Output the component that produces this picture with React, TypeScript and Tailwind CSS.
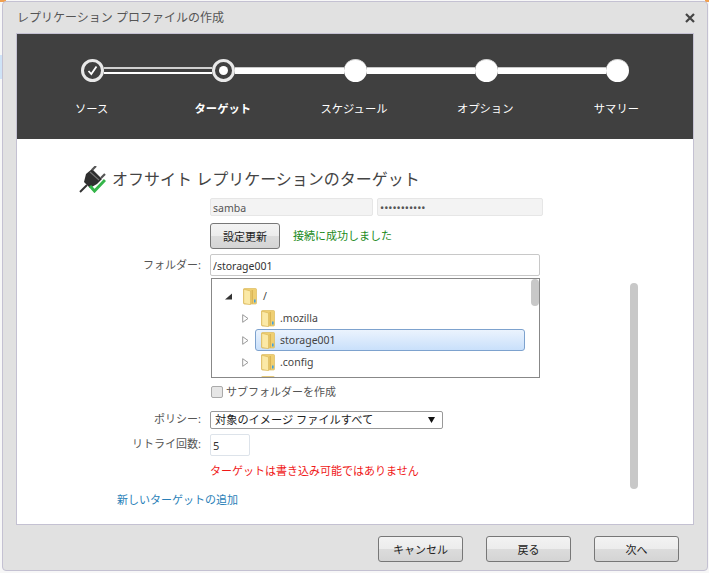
import { FC, ReactNode } from "react";

const font = "font-['Noto_Sans','Noto_Sans_CJK_JP',sans-serif]";

const Folder: FC = () => (
  <svg width="14" height="17" viewBox="0 0 14 17" className="shrink-0">
    <path d="M.5 1.5 Q.5 .5 1.5 .5 H12.5 Q13.5 .5 13.5 1.5 V15 Q13.5 16 12.5 16 H1.5 Q.5 16 .5 15 Z" fill="#efcf72" stroke="#dcbb5e" strokeWidth=".7" />
    <path d="M.7 1.2 L7.5 3 V16.7 L1.5 15.6 Q.7 15.4 .7 14.6 Z" fill="#fbe9a6" stroke="#d6b455" strokeWidth=".6" />
    <path d="M9.2 2 V15.5" stroke="#c9a343" strokeWidth=".8" />
    <rect x="11" y="11.5" width="1.6" height="3" fill="#3f9fe0" />
  </svg>
);

const ClosedArrow: FC = () => (
  <svg width="7" height="9" viewBox="0 0 7 9" className="shrink-0">
    <path d="M.7.7 L6 4.5 L.7 8.3 Z" fill="#fff" stroke="#999" strokeWidth="1" />
  </svg>
);

const OpenArrow: FC = () => (
  <svg width="7" height="7" viewBox="0 0 7 7" className="shrink-0">
    <path d="M7 .5 V6.5 H0 Z" fill="#333" />
  </svg>
);

const TreeRow: FC<{ name: string; selected?: boolean }> = ({ name, selected }) => (
  <div className="flex h-[22px] items-center pl-[30px]">
    <ClosedArrow />
    <div
      className={
        "ml-[6px] flex h-[22px] w-[270px] items-center gap-[5px] rounded-[3px] border pl-[5px] " +
        (selected
          ? "border-[#7da2ce] bg-gradient-to-b from-[#ebf3fd] to-[#c9e0fb]"
          : "border-transparent")
      }
    >
      <Folder />
      <span className="pt-[1px] text-[10.5px] text-[#444]">{name}</span>
    </div>
  </div>
);

const Button: FC<{ width: string; children: ReactNode }> = ({ width, children }) => (
  <button
    className={
      width +
      " h-[26px] rounded-[3px] border border-[#777] bg-[linear-gradient(#f3f3f3_0%,#ececec_50%,#dcdcdc_50%,#d4d4d4_100%)] text-[11px] leading-none text-[#222]"
    }
  >
    {children}
  </button>
);

const Step: FC<{ state: "done" | "current" | "todo" }> = ({ state }) => {
  if (state === "todo") {
    return <div className="h-[23px] w-[23px] shrink-0 rounded-full border-t border-[#cfcfcf] bg-white" />;
  }
  return (
    <div className="flex h-[23px] w-[23px] shrink-0 items-center justify-center rounded-full border-[3px] border-[#e8e8e8] bg-[#404040]">
      {state === "done" ? (
        <svg width="11" height="11" viewBox="0 0 11 11">
          <path d="M1.5 6 L4.3 9 L9.5 1.5" fill="none" stroke="#fff" strokeWidth="1.8" />
        </svg>
      ) : (
        <div className="h-[9px] w-[9px] rounded-full bg-white" />
      )}
    </div>
  );
};

const Line: FC<{ done?: boolean }> = ({ done }) =>
  done ? (
    <div className="h-[7px] flex-1 border-t-2 border-b-2 border-t-[#d0d0d0] border-b-white" />
  ) : (
    <div className="h-[7px] flex-1 border-t border-[#c8c8c8] bg-white" />
  );

const FieldLabel: FC<{ children?: ReactNode }> = ({ children }) => (
  <div className="w-[126px] shrink-0 pr-[9px] text-right text-[11px] text-[#555]">{children}</div>
);

const App: FC = () => {
  const steps = ["ソース", "ターゲット", "スケジュール", "オプション", "サマリー"];

  return (
    <div className={font + " relative h-[573px] w-[709px] overflow-hidden bg-[#f7f7f7] pt-[1px] pl-[2px]"}>
      <div className="absolute top-0 left-0 h-[2px] w-[6px] bg-[#f0a050]" />
      <div className="absolute top-0 right-0 h-[2px] w-[4px] bg-[#f0a050]" />
      <div className="absolute top-[55px] left-0 h-[24px] w-[2px] bg-[#cfe3f7]" />

      <div className="relative h-[570px] w-[706px] rounded-[4px] border border-[#c4c1d2] bg-[#e1e1e1] pr-[13px] pl-[13px]">
        <div className="flex h-[31px] items-center justify-between pl-[1px]">
          <span className="text-[12px] text-[#555]">レプリケーション プロファイルの作成</span>
          <svg width="10" height="10" viewBox="0 0 10 10" className="mr-[-1px]">
            <path d="M1 1 L9 9 M9 1 L1 9" stroke="#444" strokeWidth="2.2" />
          </svg>
        </div>

        <div className="border border-[#c4c1d2] bg-white">
          <div className="h-[105px] bg-[#404040]">
            <div className="flex items-center px-[64px] pt-[25px]">
              <Step state="done" />
              <Line done />
              <Step state="current" />
              <Line />
              <Step state="todo" />
              <Line />
              <Step state="todo" />
              <Line />
              <Step state="todo" />
            </div>
            <div className="mt-[19px] grid grid-cols-5 pr-[11px] pl-[9px]">
              {steps.map((s, i) => (
                <div key={s} className={"text-center text-[11.3px] text-white " + (i === 1 ? "font-bold" : "")}>
                  {s}
                </div>
              ))}
            </div>
          </div>

          <div className="relative h-[385px]">
            <div className="absolute top-[144px] left-[613px] h-[206px] w-[8px] rounded-full bg-[#c8c8c8]" />

            <div className="flex items-center pt-[27px] pl-[62px]">
              <svg width="27" height="27" viewBox="0 0 27 27" className="shrink-0">
                <path d="M1 26 L8 19" stroke="#333" strokeWidth="2" />
                <path d="M5 16 L7 8 L13 3 L23 13 L18 18 L11 22 Z" fill="#2f2f2f" />
                <path d="M11 6 L20 14" stroke="#777" strokeWidth="1.2" />
                <path d="M13 4 L17 0 M22 12 L26 8" stroke="#555" strokeWidth="2.2" />
                <path d="M11 20 L15.5 25 L26 14" fill="none" stroke="#35b54a" strokeWidth="3" />
              </svg>
              <h1 className="ml-[6px] text-[16px] leading-[27px] font-normal text-[#444]">
                オフサイト レプリケーションのターゲット
              </h1>
            </div>

            <div className="pt-[5px] pl-[67px]">
              <div className="flex pl-[126px]">
                <input
                  readOnly
                  value="samba"
                  className="h-[18px] w-[163px] rounded-[2px] border border-[#e6e6e6] bg-[#f3f3f3] px-[2px] pt-[1px] text-[10.5px] text-[#555]"
                />
                <input
                  readOnly
                  value="•••••••••••"
                  className="ml-[4px] h-[18px] w-[166px] rounded-[2px] border border-[#e6e6e6] bg-[#f3f3f3] px-[2px] pt-[1px] text-[11px] text-[#555]"
                />
              </div>

              <div className="mt-[7px] flex items-center pl-[126px]">
                <Button width="w-[70px]">設定更新</Button>
                <span className="ml-[13px] text-[11px] text-[#1a8a1a]">接続に成功しました</span>
              </div>

              <div className="mt-[5px] flex items-center">
                <FieldLabel>フォルダー:</FieldLabel>
                <input
                  readOnly
                  value="/storage001"
                  className="h-[22px] w-[330px] rounded-[2px] border border-[#c8c8c8] px-[2px] pt-[1px] text-[10.5px] text-[#333]"
                />
              </div>

              <div className="relative mt-[2px] ml-[127px] h-[100px] w-[329px] overflow-hidden border border-[#888] pt-[6px]">
                <div className="absolute top-0 right-0 h-[27px] w-[8px] rounded-full bg-[#c8c8c8]" />
                <div className="flex h-[22px] items-center pl-[13px]">
                  <OpenArrow />
                  <div className="ml-[11px] flex items-center gap-[6px]">
                    <Folder />
                    <span className="pt-[1px] text-[10.5px] text-[#444]">/</span>
                  </div>
                </div>
                <TreeRow name=".mozilla" />
                <TreeRow name="storage001" selected />
                <TreeRow name=".config" />
                <TreeRow name="" />
              </div>

              <div className="mt-[5px] ml-[127px] flex items-center">
                <div className="h-[12px] w-[12px] rounded-[2px] border border-[#aaa] bg-[#e6e6e6]" />
                <span className="ml-[3px] pt-[1px] text-[11px] text-[#555]">サブフォルダーを作成</span>
              </div>

              <div className="mt-[10px] flex items-center">
                <FieldLabel>ポリシー:</FieldLabel>
                <div className="flex h-[18px] w-[233px] items-center justify-between rounded-[2px] border border-[#999] pr-[7px] pl-[4px] text-[11.2px] text-[#222]">
                  <span className="pt-[2px]">対象のイメージ ファイルすべて</span>
                  <svg width="7" height="6" viewBox="0 0 7 6">
                    <path d="M0 0 H7 L3.5 6 Z" fill="#111" />
                  </svg>
                </div>
              </div>

              <div className="mt-[5px] flex items-center">
                <FieldLabel>リトライ回数:</FieldLabel>
                <input
                  readOnly
                  value="5"
                  className="h-[22px] w-[40px] rounded-[2px] border border-[#dde3ea] px-[2px] pt-[2px] text-[11px] text-[#333]"
                />
              </div>

              <div className="mt-[6px] pl-[126px] text-[11px] leading-[18px] text-[#f01818]">
                ターゲットは書き込み可能ではありません
              </div>
            </div>

            <div className="mt-[11px] pl-[100px] text-[11px] leading-[18px] text-[#2a7fb8]">新しいターゲットの追加</div>
          </div>
        </div>

        <div className="mt-[11px] flex justify-end gap-[23px] pr-[15px]">
          <Button width="w-[85px]">キャンセル</Button>
          <Button width="w-[85px]">戻る</Button>
          <Button width="w-[85px]">次へ</Button>
        </div>
      </div>
    </div>
  );
};

export default App;
